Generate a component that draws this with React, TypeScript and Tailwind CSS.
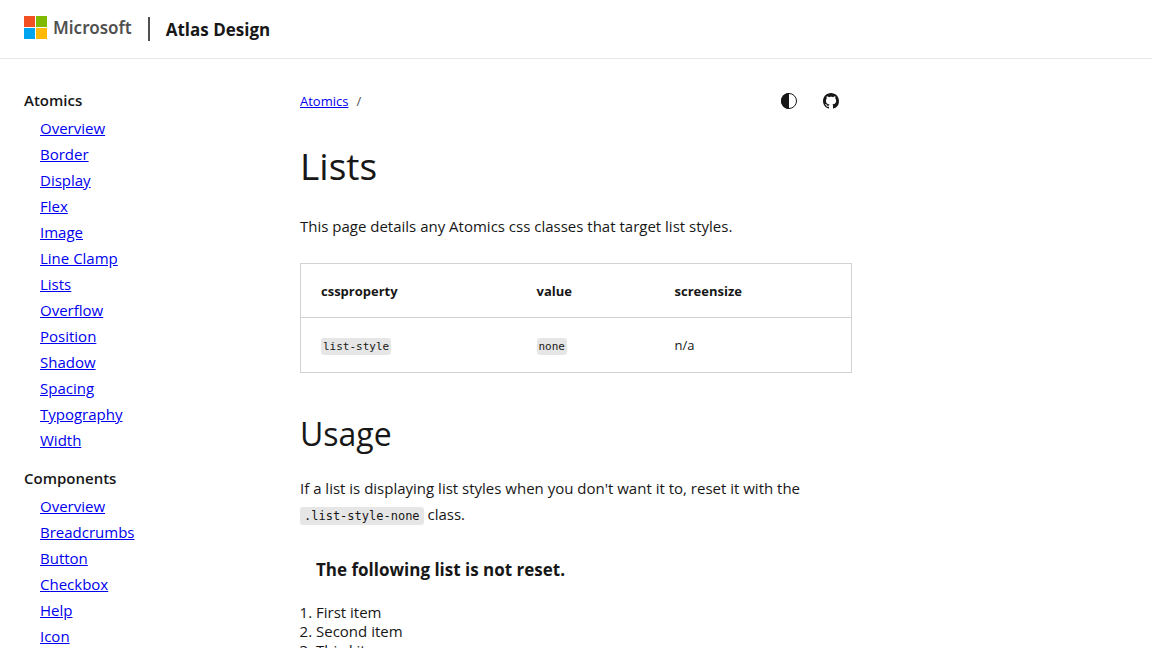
import type { ReactNode } from "react";

const sections: { title: string; links: string[] }[] = [
  {
    title: "Atomics",
    links: [
      "Overview",
      "Border",
      "Display",
      "Flex",
      "Image",
      "Line Clamp",
      "Lists",
      "Overflow",
      "Position",
      "Shadow",
      "Spacing",
      "Typography",
      "Width",
    ],
  },
  {
    title: "Components",
    links: ["Overview", "Breadcrumbs", "Button", "Checkbox", "Help", "Icon"],
  },
];

function MicrosoftLogo() {
  return (
    <a href="#" className="mb-[3px] flex items-center gap-[6px]" aria-label="Microsoft">
      <svg width="23" height="23" viewBox="0 0 23 23" aria-hidden="true">
        <path fill="#f25022" d="M0 0h11v11H0z" />
        <path fill="#7fba00" d="M12 0h11v11H12z" />
        <path fill="#00a4ef" d="M0 12h11v11H0z" />
        <path fill="#ffb900" d="M12 12h11v11H12z" />
      </svg>
      <span className="font-['Noto_Sans',sans-serif] text-[17px] leading-[24px] font-semibold text-[#505050]">
        Microsoft
      </span>
    </a>
  );
}

function ContrastIcon() {
  return (
    <svg width="16" height="16" viewBox="0 0 16 16" aria-hidden="true">
      <circle cx="8" cy="8" r="7.5" fill="none" stroke="currentColor" />
      <path fill="currentColor" d="M8 0a8 8 0 0 0 0 16z" />
    </svg>
  );
}

function GithubIcon() {
  return (
    <svg width="16" height="16" viewBox="0 0 16 16" aria-hidden="true">
      <path
        fill="currentColor"
        fillRule="evenodd"
        d="M8 0C3.58 0 0 3.58 0 8c0 3.54 2.29 6.53 5.47 7.59.4.07.55-.17.55-.38 0-.19-.01-.82-.01-1.49-2.01.37-2.53-.49-2.69-.94-.09-.23-.48-.94-.82-1.13-.28-.15-.68-.52-.01-.53.63-.01 1.08.58 1.23.82.72 1.21 1.87.87 2.33.66.07-.52.28-.87.51-1.07-1.78-.2-3.64-.89-3.64-3.95 0-.87.31-1.59.82-2.15-.08-.2-.36-1.02.08-2.12 0 0 .67-.21 2.2.82.64-.18 1.32-.27 2-.27.68 0 1.36.09 2 .27 1.53-1.04 2.2-.82 2.2-.82.44 1.1.16 1.92.08 2.12.51.56.82 1.27.82 2.15 0 3.07-1.87 3.75-3.65 3.95.29.25.54.73.54 1.48 0 1.07-.01 1.93-.01 2.2 0 .21.15.46.55.38A8.013 8.013 0 0 0 16 8c0-4.42-3.58-8-8-8z"
      />
    </svg>
  );
}

function Code({ children }: { children: ReactNode }) {
  return (
    <code className="rounded-[3px] bg-[#e6e6e6] px-[2px] py-[2px] font-['DejaVu_Sans_Mono',monospace] text-[11px] leading-none">
      {children}
    </code>
  );
}

export default function App() {
  return (
    <div className="h-screen overflow-hidden bg-white font-['Open_Sans','Noto_Sans',sans-serif] text-[15px] leading-[26px] text-[#171717]">
      <header className="flex h-[59px] items-center border-b border-[#e6e6e6] px-6">
        <MicrosoftLogo />
        <span className="mx-4 h-6 w-[2px] bg-[#505050]" />
        <a href="#" className="mt-[2px] text-[17px] font-bold">
          Atlas Design
        </a>
      </header>

      <div className="grid grid-cols-4 px-6 pt-7">
        <nav aria-label="Documentation" className="flex flex-col gap-[12px]">
          {sections.map((section) => (
            <section key={section.title}>
              <h2 className="font-semibold">{section.title}</h2>
              <ul className="pt-[2px] pl-4">
                {section.links.map((link) => (
                  <li key={link}>
                    <a href="#" className="text-[#0000ee] underline">
                      {link}
                    </a>
                  </li>
                ))}
              </ul>
            </section>
          ))}
        </nav>

        <main className="col-span-2 pt-px">
          <div className="flex items-center justify-between">
            <nav aria-label="Breadcrumb" className="flex gap-2 text-[13px]">
              <a href="#" className="text-[#0000ee] underline">
                Atomics
              </a>
              <span className="text-[#505050]">/</span>
            </nav>
            <div className="flex gap-[26px] pr-[13px]">
              <button type="button" aria-label="Change theme">
                <ContrastIcon />
              </button>
              <a href="#" aria-label="GitHub repository" className="flex items-center">
                <GithubIcon />
              </a>
            </div>
          </div>

          <h1 className="mt-[26px] text-[37px] leading-[52px]">Lists</h1>
          <p className="mt-[21px]">This page details any Atomics css classes that target list styles.</p>

          <table className="mt-6 w-full table-fixed border-collapse border border-[#d2d2d2] text-left text-[13px] leading-[22px]">
            <thead>
              <tr className="border-b border-[#d2d2d2]">
                <th className="w-[216px] px-5 pt-4 pb-[15px] font-bold">cssproperty</th>
                <th className="w-[138px] px-5 pt-4 pb-[15px] font-bold">value</th>
                <th className="px-5 pt-4 pb-[15px] font-bold">screensize</th>
              </tr>
            </thead>
            <tbody>
              <tr>
                <td className="px-5 py-4">
                  <Code>list-style</Code>
                </td>
                <td className="px-5 py-4">
                  <Code>none</Code>
                </td>
                <td className="px-5 py-4">n/a</td>
              </tr>
            </tbody>
          </table>

          <h2 className="mt-[39px] text-[32px] leading-[44px]">Usage</h2>
          <p className="mt-[19px]">
            If a list is displaying list styles when you don't want it to, reset it with the{" "}
            <code className="rounded-[3px] bg-[#e6e6e6] px-1 py-[2px] font-['DejaVu_Sans_Mono',monospace] text-[12px] leading-none whitespace-nowrap">
              .list-style-none
            </code>{" "}
            class.
          </p>

          <h3 className="mt-[30px] pl-4 text-[17px] font-bold">The following list is not reset.</h3>
          <ol className="mt-[20px] list-decimal pl-4 leading-[19px]">
            <li>First item</li>
            <li>Second item</li>
            <li>Third item</li>
          </ol>
        </main>
      </div>
    </div>
  );
}
